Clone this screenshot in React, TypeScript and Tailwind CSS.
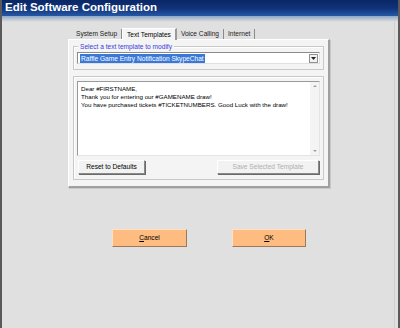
const font = { fontFamily: '"Liberation Sans", Arial, sans-serif' };

function Tab({ label, active }: { label: string; active?: boolean }) {
  if (active) {
    return (
      <div className="h-[12px] -mb-px px-[4px] flex items-center bg-[#f4f4f4] border-t border-l border-white border-r-2 border-r-[#9a9a9a] relative z-10 text-[6.6px] text-black whitespace-nowrap">
        {label}
      </div>
    );
  }
  return (
    <div className="h-[10px] px-[4px] flex items-center border-r border-[#8a8a8a] text-[6.6px] text-[#222] whitespace-nowrap">
      {label}
    </div>
  );
}

function WinButton({ children, disabled, w }: { children: React.ReactNode; disabled?: boolean; w: string }) {
  return (
    <div
      className={`${w} h-[14px] flex items-center justify-center bg-[#f2f2f2] border border-t-white border-l-white border-b-[#8a8a8a] border-r-[#8a8a8a] shadow-[1px_1px_0_#6a6a6a] text-[6.6px] whitespace-nowrap ${
        disabled ? 'text-[#b0b0b0]' : 'text-black'
      }`}
    >
      {children}
    </div>
  );
}

export default function App() {
  return (
    <div style={font} className="w-[400px] h-[328px] bg-[#e0e0e0] flex flex-col border-x-2 border-[#5a5a5a] overflow-hidden">
      {/* title bar */}
      <div className="h-[16px] shrink-0 bg-gradient-to-b from-[#0a2766] via-[#0f3278] to-[#2658a6] flex items-center pl-[3px]">
        <span className="text-white font-bold text-[11.5px] leading-none">Edit Software Configuration</span>
      </div>
      <div className="h-[6px] shrink-0 bg-gradient-to-b from-[#8fa8c6] to-[#e0e0e0]" />

      <div className="flex flex-1">
        <div className="w-[66px] shrink-0" />
        <div className="w-[262px] flex flex-col pt-[5px]">
          {/* tabs */}
          <div className="flex items-end h-[12px] pl-[4px]">
            <Tab label="System Setup" />
            <Tab label="Text Templates" active />
            <Tab label="Voice Calling" />
            <Tab label="Internet" />
          </div>
          {/* panel */}
          <div className="h-[149px] bg-[#f4f4f4] border-t border-l border-white border-r-2 border-b-2 border-r-[#a0a0a0] border-b-[#a0a0a0] shadow-[1px_1px_0_#c8c8c8] px-[4px] pt-[6px]">
            {/* group 1 */}
            <div className="relative h-[24px] border border-[#c8c8c8] shadow-[inset_1px_1px_0_#fff] px-[3px] pt-[5px]">
              <span className="absolute -top-[5px] left-[4px] px-[2px] bg-[#f4f4f4] text-[6.6px] leading-[9px] text-[#3b3bdc] whitespace-nowrap">
                Select a text template to modify
              </span>
              <div className="h-[12px] bg-white border border-t-[#8a8a8a] border-l-[#8a8a8a] border-b-[#e0e0e0] border-r-[#e0e0e0] flex items-center pl-[2px] pr-[1px]">
                <span className="bg-[#3a78d8] text-white text-[6.6px] leading-[9px] px-[1px] whitespace-nowrap">
                  Raffle Game Entry Notification SkypeChat
                </span>
                <div className="ml-auto w-[9px] h-[9px] bg-[#f2f2f2] border border-[#909090] flex items-center justify-center">
                  <svg width="5" height="3" viewBox="0 0 5 3">
                    <path d="M0 0h5L2.5 3z" fill="#222" />
                  </svg>
                </div>
              </div>
            </div>

            {/* group 2 */}
            <div className="mt-[6px] h-[104px] border border-[#c8c8c8] shadow-[inset_1px_1px_0_#fff] px-[3px] pt-[4px]">
              <div className="h-[75px] bg-white border border-t-[#9a9a9a] border-l-[#9a9a9a] border-b-[#e4e4e4] border-r-[#e4e4e4] flex">
                <div className="flex-1 pl-[3px] pt-[3px] text-[6.2px] leading-[8px] text-black whitespace-nowrap">
                  <div>Dear #FIRSTNAME,</div>
                  <div>Thank you for entering our #GAMENAME draw!</div>
                  <div>You have purchased tickets #TICKETNUMBERS. Good Luck with the draw!</div>
                </div>
                <div className="w-[9px] bg-[#f4f4f4] flex flex-col justify-between items-center py-[3px]">
                  <svg width="4" height="2" viewBox="0 0 4 2">
                    <path d="M0 2h4L2 0z" fill="#a0a0a0" />
                  </svg>
                  <svg width="4" height="2" viewBox="0 0 4 2">
                    <path d="M0 0h4L2 2z" fill="#a0a0a0" />
                  </svg>
                </div>
              </div>
              <div className="flex justify-between mt-[4px] pl-[1px] pr-[1px]">
                <WinButton w="w-[67px]">Reset to Defaults</WinButton>
                <WinButton w="w-[102px]" disabled>
                  Save Selected Template
                </WinButton>
              </div>
            </div>
          </div>

          {/* bottom buttons */}
          <div className="flex mt-[41px] pl-[44px] gap-[45px]">
            <div className="w-[75px] h-[18px] bg-[#ffbc80] border border-t-[#ffe0c4] border-l-[#ffe0c4] border-b-[#9a7a5c] border-r-[#9a7a5c] flex items-center justify-center text-[6.6px] text-black">
              <span>
                <span className="underline">C</span>ancel
              </span>
            </div>
            <div className="w-[74px] h-[18px] bg-[#ffbc80] border border-t-[#ffe0c4] border-l-[#ffe0c4] border-b-[#9a7a5c] border-r-[#9a7a5c] flex items-center justify-center text-[6.6px] text-black">
              <span>
                <span className="underline">O</span>K
              </span>
            </div>
          </div>
        </div>
        <div className="flex-1" />
        <div className="w-px bg-[#cfcfcf] mr-[3px]" />
      </div>
    </div>
  );
}
